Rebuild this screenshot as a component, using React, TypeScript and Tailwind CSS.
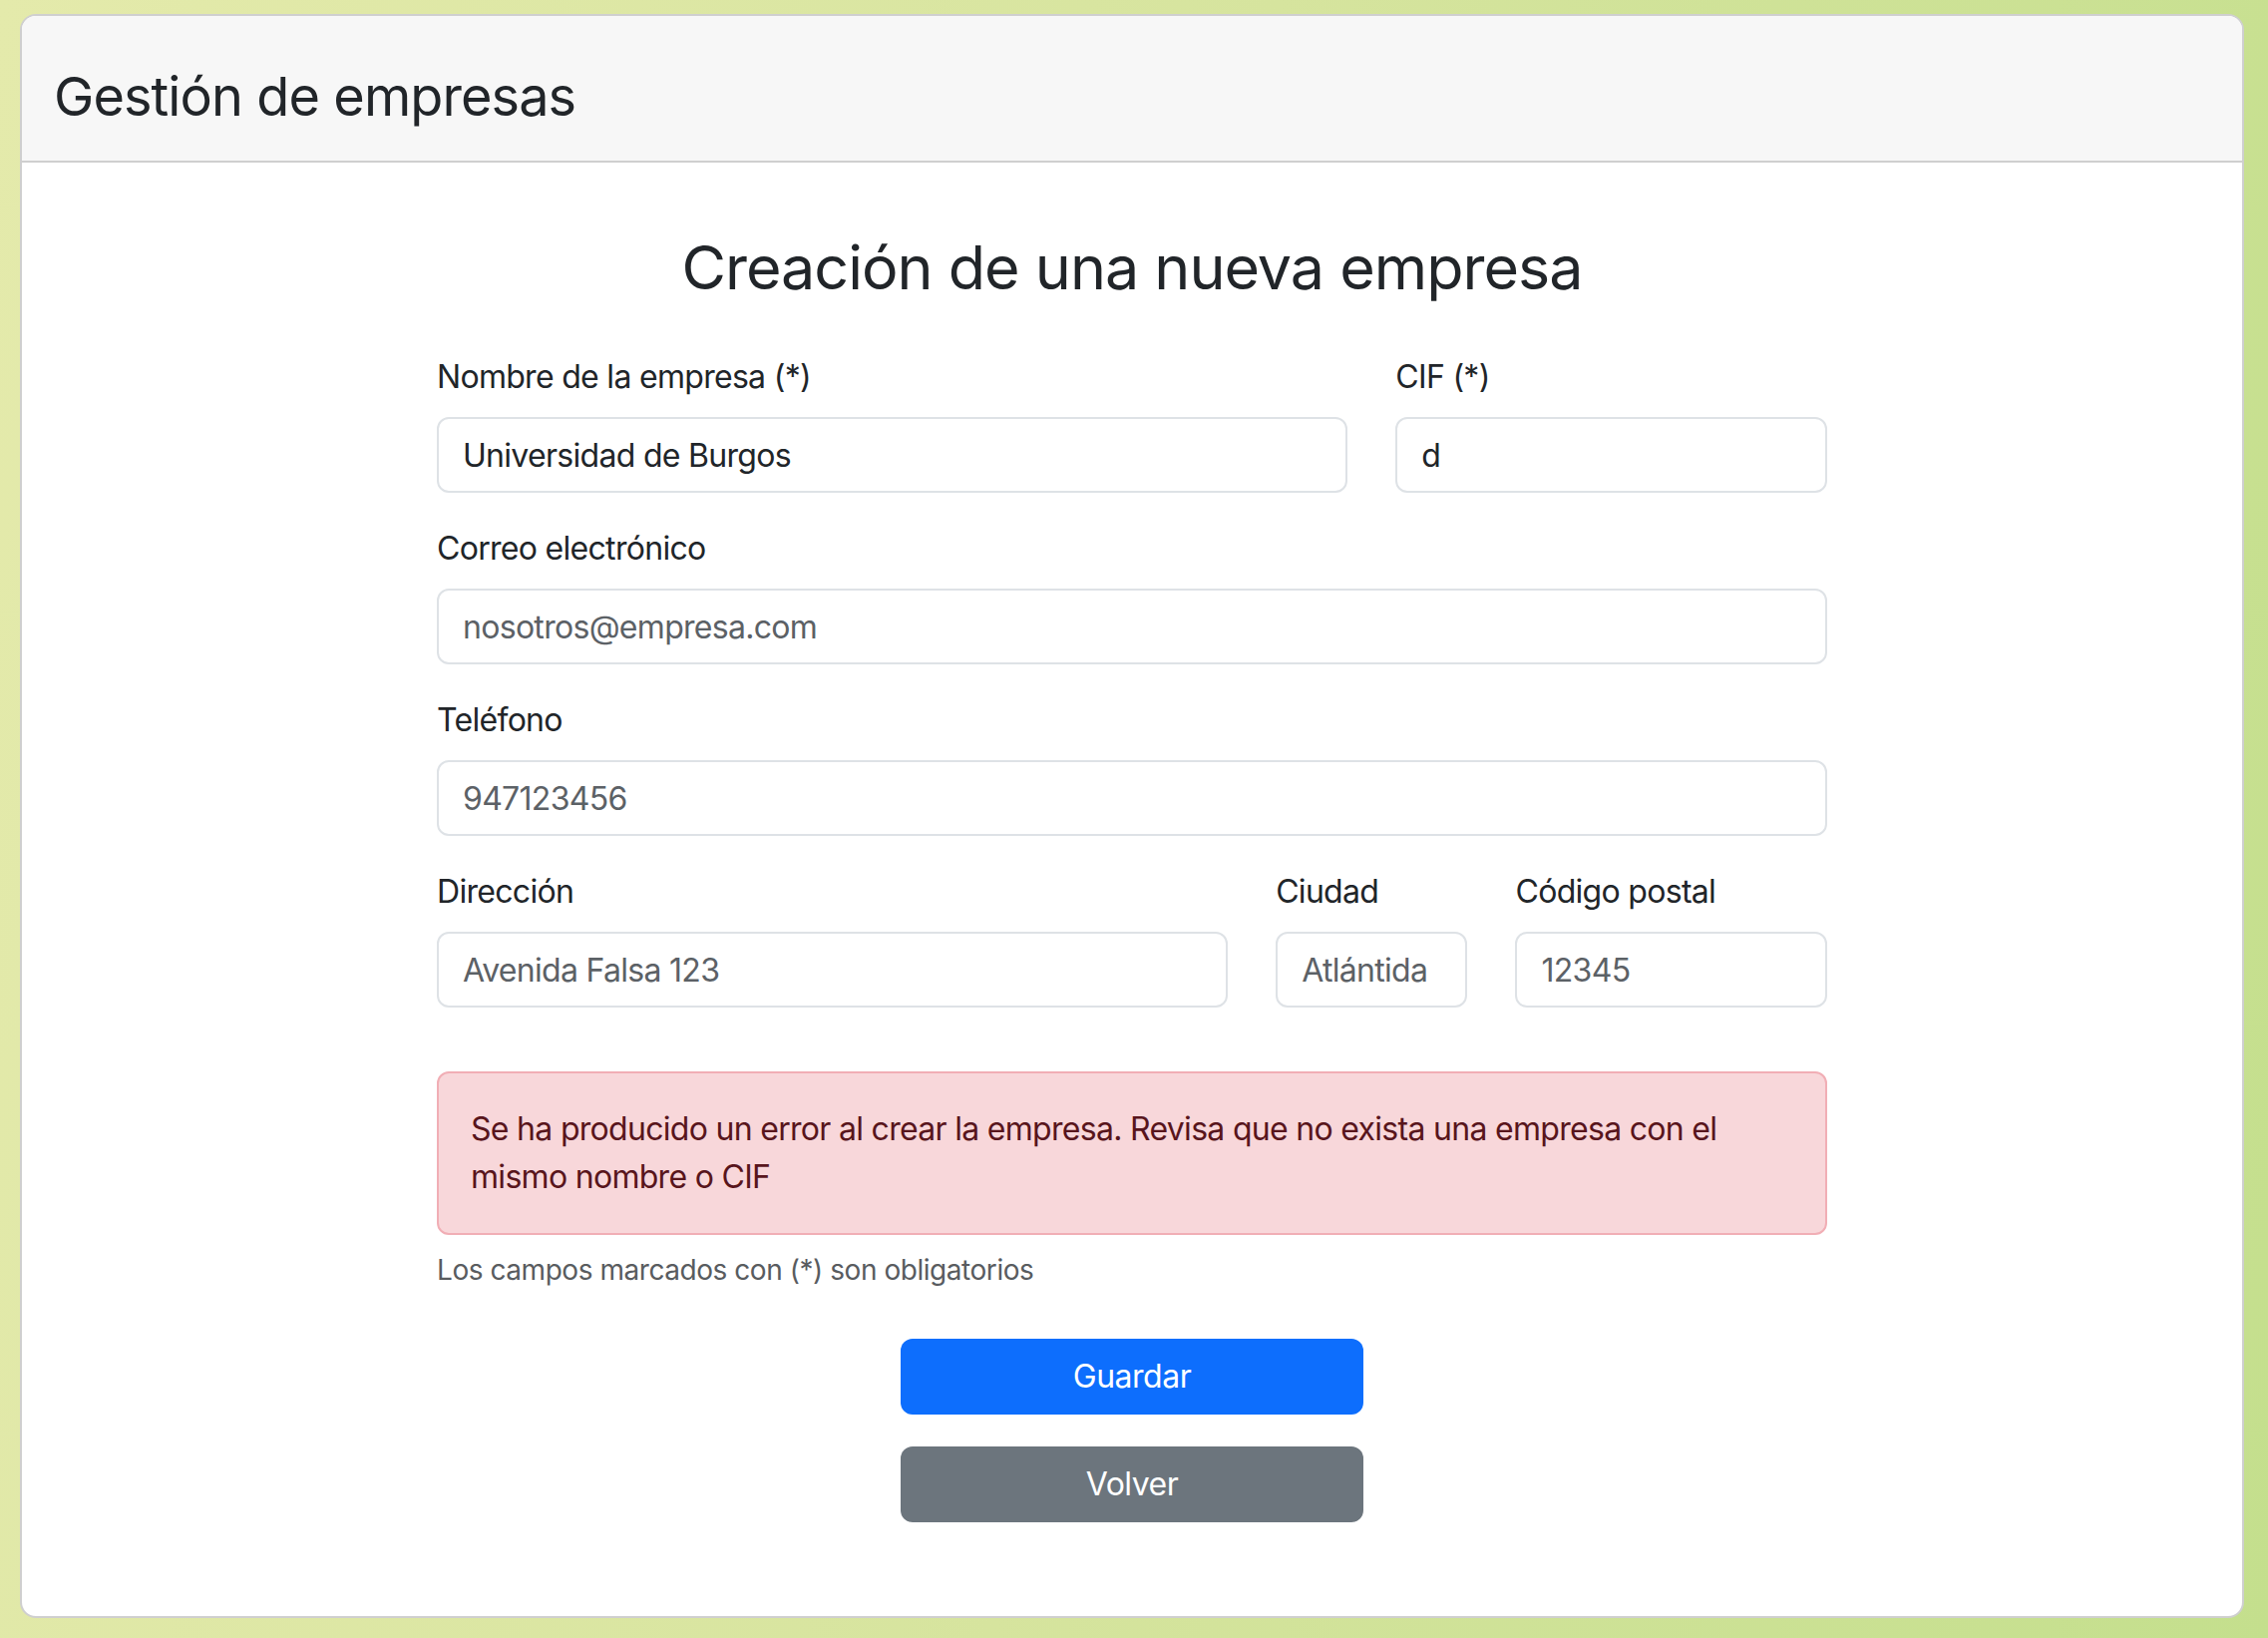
import React from "react";

const font = { fontFamily: "Inter, 'Noto Sans', sans-serif" };

function Field({
  label,
  value,
  placeholder,
  span,
}: {
  label: string;
  value?: string;
  placeholder?: string;
  span: string;
}) {
  return (
    <div className={`${span} flex flex-col mb-[32px]`}>
      <label className="text-[32px] leading-[48px] tracking-[-0.7px] text-[#212529] mb-[16px]">{label}</label>
      <input
        type="text"
        defaultValue={value}
        placeholder={placeholder}
        readOnly
        className="h-[76px] w-full rounded-[12px] border-2 border-[#dee2e6] bg-white px-[24px] text-[32px] tracking-[-0.7px] text-[#212529] placeholder:text-[#5c6166] outline-none"
      />
    </div>
  );
}

export default function App() {
  return (
    <div
      style={font}
      className="min-h-[1642px] w-full bg-[linear-gradient(100deg,#e4eaab_0%,#d6e49e_50%,#c4df8d_100%)] pt-[14px] pl-[20px] pr-[24px] pb-[20px] flex"
    >
      <div className="flex-1 flex flex-col rounded-[16px] border-2 border-[#cfcfcf] bg-white overflow-hidden">
        <div className="h-[147px] shrink-0 flex items-center pl-[32px] pt-[16px] bg-[#f7f7f7] border-b-2 border-[#cfcfcf]">
          <h3 className="text-[54px] leading-none text-[#212529] tracking-[-0.9px]">Gestión de empresas</h3>
        </div>
        <div className="flex-1 flex flex-col items-center">
          <h2 className="mt-[67px] mb-[47px] text-[61px] leading-[77px] text-[#212529] tracking-[-1px]">
            Creación de una nueva empresa
          </h2>
          <div className="w-[1394px] flex flex-col">
            <div className="grid grid-cols-12 gap-x-[48px]">
              <Field span="col-span-8" label="Nombre de la empresa (*)" value="Universidad de Burgos" />
              <Field span="col-span-4" label="CIF (*)" value="d" />
              <Field span="col-span-12" label="Correo electrónico" placeholder="nosotros@empresa.com" />
              <Field span="col-span-12" label="Teléfono" placeholder="947123456" />
              <Field span="col-span-7" label="Dirección" placeholder="Avenida Falsa 123" />
              <Field span="col-span-2" label="Ciudad" placeholder="Atlántida" />
              <Field span="col-span-3" label="Código postal" placeholder="12345" />
            </div>
            <div className="mt-[32px] rounded-[12px] border-2 border-[#f1aeb5] bg-[#f8d7da] px-[32px] py-[32px] text-[32px] leading-[48px] tracking-[-0.7px] text-[#58151c]">
              Se ha producido un error al crear la empresa. Revisa que no exista una empresa con el mismo nombre o CIF
            </div>
            <p className="mt-[14px] text-[28px] leading-[42px] tracking-[-0.45px] text-[#595c5f]">
              Los campos marcados con (*) son obligatorios
            </p>
            <div className="mt-[48px] flex flex-col items-center gap-[32px]">
              <button className="w-[464px] h-[76px] rounded-[12px] bg-[#0d6efd] text-white text-[32px] tracking-[-0.5px]">
                Guardar
              </button>
              <button className="w-[464px] h-[76px] rounded-[12px] bg-[#6c757d] text-white text-[32px] tracking-[-0.5px]">
                Volver
              </button>
            </div>
          </div>
        </div>
      </div>
    </div>
  );
}
